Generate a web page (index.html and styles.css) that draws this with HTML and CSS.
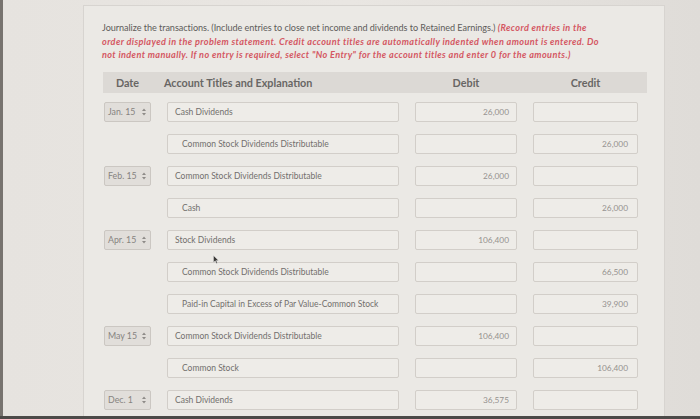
FILE: index.html
```html
<!DOCTYPE html>
<html>
<head>
<meta charset="utf-8">
<link rel="stylesheet" href="styles.css">
</head>
<body>
<div class="screen">
  <div class="bezel-left"></div>
  <div class="desk">
    <div class="panel">
      <p class="prompt">Journalize the transactions. (Include entries to close net income and dividends to Retained Earnings.) <em>(Record entries in the<br>order displayed in the problem statement. Credit account titles are automatically indented when amount is entered. Do<br>not indent manually. If no entry is required, select "No Entry" for the account titles and enter 0 for the amounts.)</em></p>
      <div class="journal">
        <div class="head">
          <div class="h-date">Date</div>
          <div class="h-acct">Account Titles and Explanation</div>
          <div class="h-amt">Debit</div>
          <div class="h-amt">Credit</div>
        </div>
        <div class="rows">
          <div class="row">
            <div class="date"><span>Jan. 15</span><svg class="spin" viewBox="0 0 4 8" width="4" height="8"><path d="M0 3 L2 0.5 L4 3Z M0 5 L2 7.5 L4 5Z"/></svg></div>
            <div class="box acct">Cash Dividends</div>
            <div class="box amt">26,000</div>
            <div class="box amt"></div>
          </div>
          <div class="row">
            <div class="blank"></div>
            <div class="box acct indent">Common Stock Dividends Distributable</div>
            <div class="box amt"></div>
            <div class="box amt">26,000</div>
          </div>
          <div class="row">
            <div class="date"><span>Feb. 15</span><svg class="spin" viewBox="0 0 4 8" width="4" height="8"><path d="M0 3 L2 0.5 L4 3Z M0 5 L2 7.5 L4 5Z"/></svg></div>
            <div class="box acct">Common Stock Dividends Distributable</div>
            <div class="box amt">26,000</div>
            <div class="box amt"></div>
          </div>
          <div class="row">
            <div class="blank"></div>
            <div class="box acct indent">Cash</div>
            <div class="box amt"></div>
            <div class="box amt">26,000</div>
          </div>
          <div class="row">
            <div class="date"><span>Apr. 15</span><svg class="spin" viewBox="0 0 4 8" width="4" height="8"><path d="M0 3 L2 0.5 L4 3Z M0 5 L2 7.5 L4 5Z"/></svg></div>
            <div class="box acct">Stock Dividends</div>
            <div class="box amt">106,400</div>
            <div class="box amt"></div>
          </div>
          <div class="row">
            <div class="blank"></div>
            <div class="box acct indent">Common Stock Dividends Distributable<svg class="cursor" viewBox="0 0 6 9" width="6" height="9"><path d="M0.5 0.5 L0.5 7.5 L2.2 5.8 L3.4 8.5 L4.4 8 L3.3 5.4 L5.5 5.4Z"/></svg></div>
            <div class="box amt"></div>
            <div class="box amt">66,500</div>
          </div>
          <div class="row">
            <div class="blank"></div>
            <div class="box acct indent">Paid-in Capital in Excess of Par Value-Common Stock</div>
            <div class="box amt"></div>
            <div class="box amt">39,900</div>
          </div>
          <div class="row">
            <div class="date"><span>May 15</span><svg class="spin" viewBox="0 0 4 8" width="4" height="8"><path d="M0 3 L2 0.5 L4 3Z M0 5 L2 7.5 L4 5Z"/></svg></div>
            <div class="box acct">Common Stock Dividends Distributable</div>
            <div class="box amt">106,400</div>
            <div class="box amt"></div>
          </div>
          <div class="row">
            <div class="blank"></div>
            <div class="box acct indent">Common Stock</div>
            <div class="box amt"></div>
            <div class="box amt">106,400</div>
          </div>
          <div class="row">
            <div class="date"><span>Dec. 1</span><svg class="spin" viewBox="0 0 4 8" width="4" height="8"><path d="M0 3 L2 0.5 L4 3Z M0 5 L2 7.5 L4 5Z"/></svg></div>
            <div class="box acct">Cash Dividends</div>
            <div class="box amt">36,575</div>
            <div class="box amt"></div>
          </div>
        </div>
      </div>
    </div>
  </div>
</div>
<div class="bezel-bottom"></div>
</body>
</html>
```
FILE: styles.css
```css
* { box-sizing: border-box; }
html, body { margin: 0; padding: 0; }
body {
  width: 700px;
  height: 419px;
  overflow: hidden;
  background: #e3e0dc;
  font-family: Lato, "Open Sans", sans-serif;
  display: flex;
  flex-direction: column;
}
.screen {
  display: flex;
  height: 416px;
}
.bezel-left {
  width: 3px;
  background: #77736f;
}
.desk {
  flex: 1;
  padding: 5px 0 0 80px;
  background: linear-gradient(90deg, #e6e3df 0%, #e9e6e2 50%, #dfdcd8 100%);
}
.panel {
  width: 582px;
  height: 100%;
  background: #ebe9e5;
  border: 1px solid #d7d4d0;
  border-bottom: none;
  padding: 15px 0 0 19px;
}
.prompt {
  margin: 0 0 0 -1px;
  font-size: 9.1px;
  line-height: 13.5px;
  color: #5e5c5a;
  letter-spacing: -0.05px;
  white-space: nowrap;
}
.prompt em {
  font-style: italic;
  font-weight: 700;
  color: #d45762;
  letter-spacing: 0.38px;
}
.journal {
  margin-top: 10px;
}
.head {
  width: 544px;
  height: 21px;
  background: #dcd9d5;
  display: grid;
  grid-template-columns: 47px 232px 102px 105px;
  column-gap: 16px;
  align-items: center;
  padding-left: 1px;
  font-size: 10.8px;
  font-weight: 700;
  color: #686664;
}
.h-date { text-align: center; }
.h-acct { margin-left: -3px; }
.h-amt { text-align: center; }
.rows {
  display: flex;
  flex-direction: column;
  gap: 12px;
  padding: 9px 0 0 1px;
}
.row {
  display: grid;
  grid-template-columns: 47px 232px 102px 105px;
  column-gap: 16px;
  height: 20px;
}
.box {
  height: 20px;
  border: 1px solid #d2cec9;
  border-radius: 2px;
  background: #eeece8;
  display: flex;
  align-items: center;
  font-size: 8.3px;
  color: #7d7b79;
}
.acct {
  position: relative;
  padding-left: 7px;
  font-size: 8.5px;
  color: #726f6d;
}
.acct.indent { padding-left: 14px; }
.amt {
  justify-content: flex-end;
  padding-right: 7px;
  color: #95928f;
}
.row .amt:last-child { padding-right: 9px; }
.date {
  height: 20px;
  border: 1px solid #cbc7c2;
  border-radius: 2px;
  background: #e1deda;
  display: flex;
  align-items: center;
  justify-content: space-between;
  padding: 0 4px 0 3px;
  font-size: 8.8px;
  color: #86837f;
}
.spin { fill: #8e8b88; }
.cursor {
  position: absolute;
  left: 45px;
  top: -8px;
  fill: #3a3836;
  stroke: #eeeeee;
  stroke-width: 0.4;
}
.bezel-bottom {
  height: 3px;
  background: #4c4a48;
}
```
